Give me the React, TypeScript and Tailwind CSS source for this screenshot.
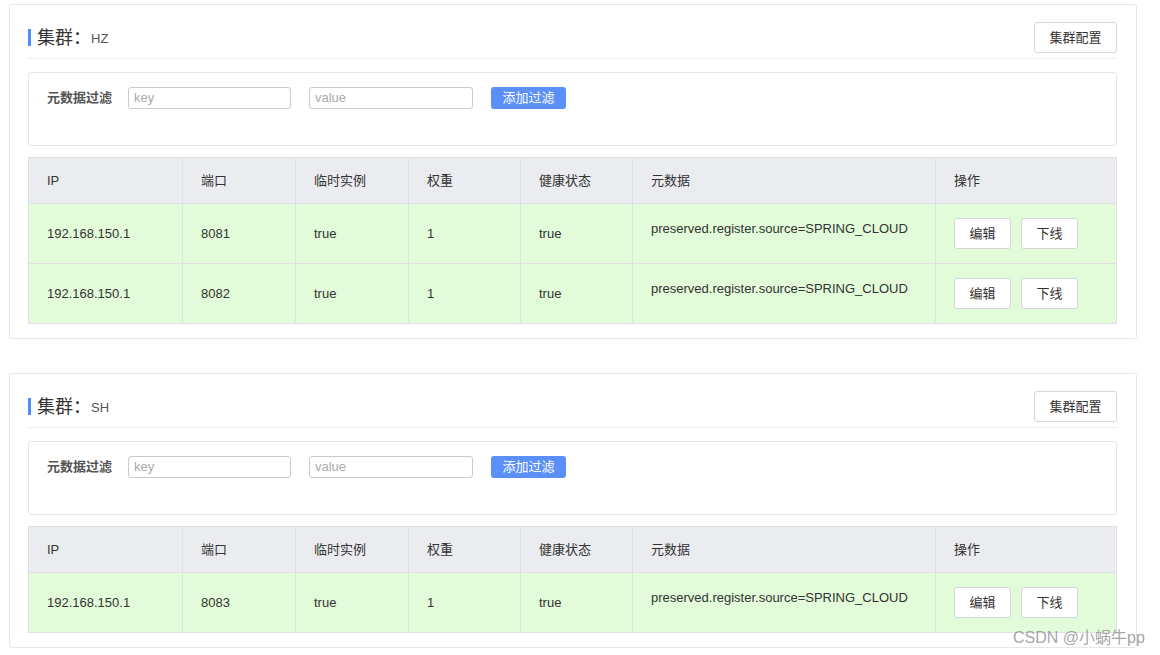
import React from 'react';

type Instance = {
  ip: string;
  port: string;
  ephemeral: string;
  weight: string;
  healthy: string;
  metadata: string;
};

const clusters: { name: string; instances: Instance[] }[] = [
  {
    name: 'HZ',
    instances: [
      { ip: '192.168.150.1', port: '8081', ephemeral: 'true', weight: '1', healthy: 'true', metadata: 'preserved.register.source=SPRING_CLOUD' },
      { ip: '192.168.150.1', port: '8082', ephemeral: 'true', weight: '1', healthy: 'true', metadata: 'preserved.register.source=SPRING_CLOUD' },
    ],
  },
  {
    name: 'SH',
    instances: [
      { ip: '192.168.150.1', port: '8083', ephemeral: 'true', weight: '1', healthy: 'true', metadata: 'preserved.register.source=SPRING_CLOUD' },
    ],
  },
];

const cols = ['w-[154px]', 'w-[113px]', 'w-[113px]', 'w-[112px]', 'w-[112px]', 'w-[303px]', 'flex-1'];
const headers = ['IP', '端口', '临时实例', '权重', '健康状态', '元数据', '操作'];

const font = "font-['Liberation_Sans','Noto_Sans_CJK_SC',sans-serif]";

const ClusterCard: React.FC<{ name: string; instances: Instance[] }> = ({ name, instances }) => {
  return (
    <div className="border border-[#e4e6ea] rounded-[3px] pl-[18px] pr-[19px] pt-[17px] pb-[14px] bg-white">
      {/* Header */}
      <div className="flex items-center justify-between border-b border-[#eceef1] pb-[5px]">
        <div className="flex items-center">
          <span className="w-[3px] h-[17px] bg-[#4f8ef7] mr-[6px]" />
          <span className="text-[18px] text-[#333] leading-none">集群：</span>
          <span className="text-[13px] text-[#555] mt-[2px]">{name}</span>
        </div>
        <button className="w-[83px] h-[31px] border border-[#d4d6db] rounded-[3px] text-[13px] text-[#333] bg-white">
          集群配置
        </button>
      </div>

      {/* Filter */}
      <div className="mt-[13px] h-[74px] border border-[#e4e6ea] rounded-[3px] pl-[18px] pt-[14px] flex items-start">
        <span className="text-[13px] text-[#555] font-bold leading-[21px] w-[81px]">元数据过滤</span>
        <div className="w-[163px] h-[22px] border border-[#c8cad0] rounded-[3px] px-[5px] text-[13px] leading-[20px] text-[#aaa]">key</div>
        <div className="ml-[18px] w-[164px] h-[22px] border border-[#c8cad0] rounded-[3px] px-[5px] text-[13px] leading-[20px] text-[#aaa]">value</div>
        <button className="ml-[18px] w-[75px] h-[22px] rounded-[3px] bg-[#5b8ff9] text-white text-[13px] leading-[22px]">添加过滤</button>
      </div>

      {/* Table */}
      <div className="mt-[11px] border border-[#dfe1e6]">
        <div className="flex h-[46px] bg-[#ebecf0] border-b border-[#dfe1e6]">
          {headers.map((h, i) => (
            <div
              key={h}
              className={`${cols[i]} flex items-center pl-[18px] text-[13px] text-[#333] ${i < headers.length - 1 ? 'border-r border-[#dfe1e6]' : ''}`}
            >
              {h}
            </div>
          ))}
        </div>
        {instances.map((r, idx) => (
          <div
            key={r.port}
            className={`flex bg-[#e2fbd8] ${idx < instances.length - 1 ? 'h-[60px] border-b border-[#dfe1e6]' : 'h-[59px]'}`}
          >
            <div className={`${cols[0]} flex items-center pl-[18px] text-[13px] text-[#333] border-r border-[#dfe1e6]`}>{r.ip}</div>
            <div className={`${cols[1]} flex items-center pl-[18px] text-[13px] text-[#333] border-r border-[#dfe1e6]`}>{r.port}</div>
            <div className={`${cols[2]} flex items-center pl-[18px] text-[13px] text-[#333] border-r border-[#dfe1e6]`}>{r.ephemeral}</div>
            <div className={`${cols[3]} flex items-center pl-[18px] text-[13px] text-[#333] border-r border-[#dfe1e6]`}>{r.weight}</div>
            <div className={`${cols[4]} flex items-center pl-[18px] text-[13px] text-[#333] border-r border-[#dfe1e6]`}>{r.healthy}</div>
            <div className={`${cols[5]} pl-[18px] pt-[15px] text-[13px] text-[#333] border-r border-[#dfe1e6]`}>{r.metadata}</div>
            <div className={`${cols[6]} flex items-center pl-[18px] gap-[10px]`}>
              <button className="w-[57px] h-[31px] bg-white border border-[#d4d6db] rounded-[3px] text-[13px] text-[#333]">编辑</button>
              <button className="w-[57px] h-[31px] bg-white border border-[#d4d6db] rounded-[3px] text-[13px] text-[#333]">下线</button>
            </div>
          </div>
        ))}
      </div>
    </div>
  );
};

const App: React.FC = () => {
  return (
    <div className={`relative w-[1160px] h-[655px] bg-white overflow-hidden ${font}`}>
      <div className="pl-[9px] pr-[23px] pt-[4px] flex flex-col gap-[34px]">
        {clusters.map((c) => (
          <ClusterCard key={c.name} name={c.name} instances={c.instances} />
        ))}
      </div>
      {/* watermark */}
      <div className="absolute left-[1013px] top-[626px] text-[16px] text-[#9a9a9a]/90 whitespace-nowrap">
        CSDN @小蜗牛pp
      </div>
    </div>
  );
};

export default App;
